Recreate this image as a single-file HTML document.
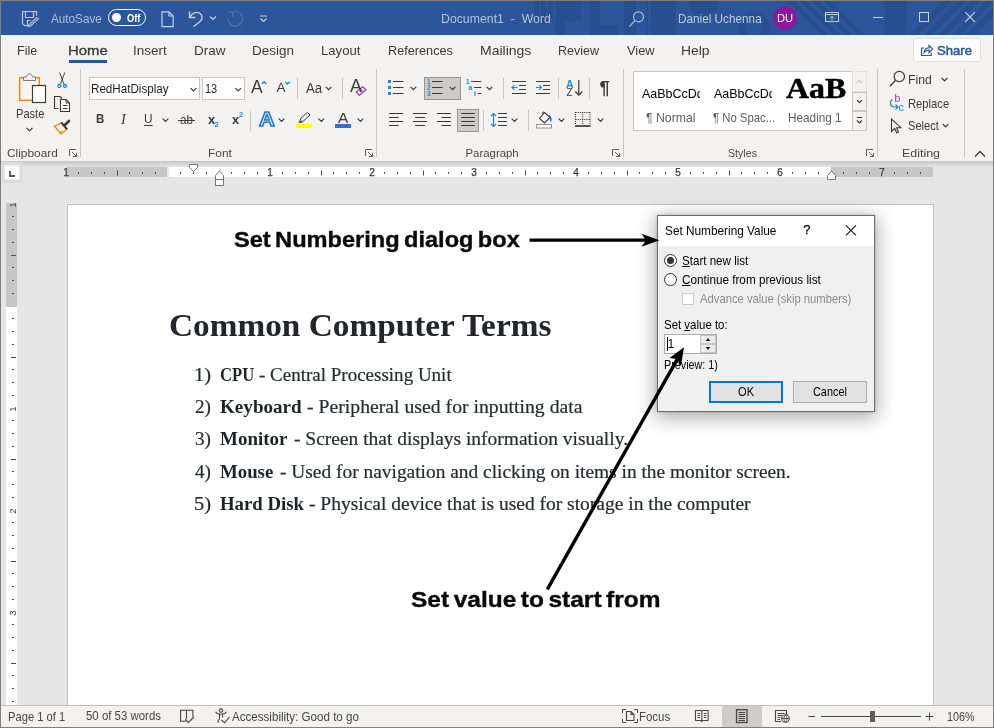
<!DOCTYPE html>
<html><head><meta charset="utf-8"><title>Document1 - Word</title>
<style>
*{box-sizing:border-box;margin:0;padding:0}
html,body{width:994px;height:728px;overflow:hidden;background:#f3f2f1}
body{position:relative;font-family:"Liberation Sans",sans-serif;font-size:13px;color:#323130}
.a{position:absolute;white-space:nowrap}
#title,#tabs,#ribbon,#doc,#status{will-change:transform}
#win{position:absolute;left:0;top:0;width:994px;height:728px;border:1px solid #807e7c;overflow:hidden}
#title{position:absolute;left:1px;top:1px;width:992px;height:34px;background:#2b579a;overflow:hidden}
#title .t{position:absolute;white-space:nowrap;color:#fff;font-size:13px;line-height:16px}
#tabs{position:absolute;left:1px;top:35px;width:992px;height:31px;background:#f3f2f1}
#tabs .t{position:absolute;top:7px;line-height:16px;font-size:13.2px;color:#3b3a39;white-space:nowrap}
#ribbon{position:absolute;left:0;top:0;width:994px;height:161px}
#doc{position:absolute;left:1px;top:161px;width:992px;height:544px;background:#e6e6e6;overflow:hidden}
#page{position:absolute;left:66px;top:43px;width:867px;height:520px;background:#fff;border:1px solid #c0c0c0;border-bottom:none}
#status{position:absolute;left:1px;top:705px;width:992px;height:22px;background:#f3f2f1;border-top:1px solid #c2c0be}
</style></head>
<body>
<div id="win"></div>
<div id="title"><svg class="a" style="left:0;top:0" width="992" height="34" viewBox="1 1 992 34">
<g fill="#274f8f">
<rect x="535" y="0" width="4" height="18"/><rect x="541" y="0" width="5" height="24"/><rect x="548" y="0" width="5" height="18"/>
<rect x="555.500" y="0" width="10" height="36"/><rect x="565" y="0" width="16" height="21"/><rect x="590" y="0" width="10" height="36"/><rect x="600" y="25" width="18" height="11"/>
<rect x="624" y="0" width="12" height="36"/>
<rect x="646" y="0" width="2" height="36"/><rect x="651" y="0" width="2" height="36"/><rect x="655" y="0" width="3" height="36"/><rect x="660" y="0" width="4" height="36"/><rect x="666" y="0" width="6" height="36"/>
<circle cx="703" cy="3" r="14"/>
</g>
<g fill="none" stroke="#274f8f">
<circle cx="754" cy="28" r="12" stroke-width="8"/>
<path d="M790 0l36 36M802 0l36 36M814 0l36 36M826 0l36 36" stroke-width="5"/>
<circle cx="780" cy="18" r="116" stroke-width="22"/>
<path d="M913 36l36-36M927 36l36-36M941 36l36-36M955 36l36-36M969 36l36-36" stroke-width="6"/>
</g></svg>
<svg class="a" style="left:20px;top:9px" width="19" height="18" viewBox="0 0 19 18" fill="none" stroke="#b9c7df" stroke-width="1.200">
<path d="M15.500 5.700V1.500H1.500v12.200l2.500 2h2.500v-5.200h3"/><path d="M4.500 1.500v6h8v-6"/><path d="M7.100 16.700l1.140-2.620L16 7.200l1.600 1.800-7.760 6.880z" fill="#b9c7df" fill-opacity=".45" stroke-width="1"/></svg>
<div class="a" style="left:50.00px;top:7.5px;line-height:20px;font-size:12.300px;transform:scaleX(0.9528);transform-origin:0 50%;color:#aebcda">AutoSave</div>
<div class="a" style="left:107px;top:8px;width:38px;height:17px;border:1.3px solid #fff;border-radius:9px"></div>
<div class="a" style="left:111px;top:12px;width:9px;height:9px;border-radius:5px;background:#fff"></div>
<div class="a" style="left:126.00px;top:6.5px;line-height:20px;font-size:11px;transform:scaleX(0.8438);transform-origin:0 50%;color:#fff;font-weight:bold">Off</div>
<svg class="a" style="left:159px;top:9px" width="16" height="18" viewBox="0 0 16 18" fill="none" stroke="#c3d0e6" stroke-width="1.2"><path d="M2 1.8h7l4.2 4.2v10.6H2zM9 1.8v4.2h4.2"/></svg>
<svg class="a" style="left:186px;top:8px" width="18" height="19" viewBox="0 0 18 19" fill="none" stroke="#c3d0e6" stroke-width="1.4"><path d="M2.5 2.5v6h6"/><path d="M2.8 8.2C5 4.2 9.5 2 13 4.500c3 2.200 2.600 5.800 0 8L6.500 17.800"/></svg>
<svg class="a" style="left:208px;top:14px" width="8" height="6" viewBox="0 0 8 6" fill="none" stroke="#c3d0e6" stroke-width="1.2"><path d="M1 1.500l3 3 3-3"/></svg>
<svg class="a" style="left:225px;top:8px" width="19" height="19" viewBox="0 0 19 19" fill="none" stroke="#4a70ad" stroke-width="1.4"><path d="M8.030 2.510A7.300 7.300 0 1 1 2.050 8.800"/><path d="M1.500 2.800h5.200v5.200"/></svg>
<svg class="a" style="left:258px;top:14px" width="9" height="8" viewBox="0 0 9 8" fill="none" stroke="#c3d0e6" stroke-width="1.2"><path d="M1 1h7M1.500 3.500l3 3 3-3"/></svg>
<div class="a" style="left:439.99px;top:7.8px;line-height:20px;font-size:12.200px;transform:scaleX(1.0093);transform-origin:0 50%;color:#b4c2dc">Document1&nbsp; -&nbsp; Word</div>
<svg class="a" style="left:627px;top:9px" width="18" height="18" viewBox="0 0 18 18" fill="none" stroke="#aab9d5" stroke-width="1.2"><circle cx="10.500" cy="6.800" r="5"/><path d="M7 10.500L1.500 16.500"/></svg>
<div class="a" style="left:677.03px;top:7.6px;line-height:20px;font-size:12.200px;transform:scaleX(0.9651);transform-origin:0 50%;color:#bccae0">Daniel Uchenna</div>
<div class="a" style="left:772px;top:5px;width:24px;height:24px;border-radius:12px;background:#8b1a9a"></div>
<div class="a" style="left:775.96px;top:7px;line-height:20px;font-size:10.800px;transform:scaleX(1.0357);transform-origin:0 50%;color:#fff">DU</div>
<svg class="a" style="left:823px;top:10px" width="16" height="12" viewBox="0 0 16 12" fill="none" stroke="#c0cce2" stroke-width="1"><rect x="1.500" y="1.500" width="13" height="9"/><path d="M1.500 3.500h13M8 9.500V5.500M6 7.300l2-2 2 2"/></svg>
<div class="a" style="left:872px;top:16px;width:10px;height:1px;background:#c5d0e4"></div>
<div class="a" style="left:918px;top:11px;width:10px;height:10px;border:1px solid #c5d0e4"></div>
<svg class="a" style="left:963px;top:10px" width="12" height="12" viewBox="0 0 12 12" fill="none" stroke="#c8d3e6" stroke-width="1.1"><path d="M1.200 1.200l9.800 9.800M11 1.200l-9.800 9.800"/></svg>
</div>
<div id="tabs"><div class="a" style="left:16.05px;top:6px;line-height:20px;font-size:13.3px;transform:scaleX(0.9500);transform-origin:0 50%;color:#3b3a39">File</div>
<div class="a" style="left:66.88px;top:6px;line-height:20px;font-size:13.3px;transform:scaleX(1.1176);transform-origin:0 50%;color:#3b3a39;-webkit-text-stroke:.35px #3b3a39">Home</div>
<div class="a" style="left:68px;top:25px;width:38px;height:3px;background:#2b579a"></div>
<div class="a" style="left:131.98px;top:6px;line-height:20px;font-size:13.3px;transform:scaleX(1.0156);transform-origin:0 50%;color:#3b3a39">Insert</div>
<div class="a" style="left:192.98px;top:6px;line-height:20px;font-size:13.3px;transform:scaleX(1.0167);transform-origin:0 50%;color:#3b3a39">Draw</div>
<div class="a" style="left:250.99px;top:6px;line-height:20px;font-size:13.3px;transform:scaleX(1.0125);transform-origin:0 50%;color:#3b3a39">Design</div>
<div class="a" style="left:320.01px;top:6px;line-height:20px;font-size:13.3px;transform:scaleX(0.9872);transform-origin:0 50%;color:#3b3a39">Layout</div>
<div class="a" style="left:387.04px;top:6px;line-height:20px;font-size:13.3px;transform:scaleX(0.9552);transform-origin:0 50%;color:#3b3a39">References</div>
<div class="a" style="left:478.95px;top:6px;line-height:20px;font-size:13.3px;transform:scaleX(1.0532);transform-origin:0 50%;color:#3b3a39">Mailings</div>
<div class="a" style="left:557.06px;top:6px;line-height:20px;font-size:13.3px;transform:scaleX(0.9419);transform-origin:0 50%;color:#3b3a39">Review</div>
<div class="a" style="left:625.50px;top:6px;line-height:20px;font-size:13.3px;transform:scaleX(0.9655);transform-origin:0 50%;color:#3b3a39">View</div>
<div class="a" style="left:679.96px;top:6px;line-height:20px;font-size:13.3px;transform:scaleX(1.0385);transform-origin:0 50%;color:#3b3a39">Help</div>
<div class="a" style="left:912px;top:3px;width:68px;height:24px;background:#fff;border:1px solid #e1dfdd;border-radius:3px"></div>
<svg class="a" style="left:919px;top:8px" width="14" height="14" viewBox="0 0 14 14" fill="none" stroke="#2b579a" stroke-width="1.2"><path d="M4 5H1.600v7.500h9.600V9.500"/><path d="M4.200 9.500C4.600 6.500 6.500 4.800 9 4.800V2.500l3.600 3.500L9 9.500V7.200C7 7.200 5.500 7.800 4.200 9.500z"/></svg>
<div class="a" style="left:936.00px;top:6px;line-height:20px;font-size:13.3px;transform:scaleX(0.9857);transform-origin:0 50%;color:#2b579a;-webkit-text-stroke:.5px #2b579a">Share</div>
</div>
<div id="ribbon"><svg class="a" style="left:0;top:0" width="994" height="161" viewBox="0 0 994 161" fill="none">
<!-- group separators -->
<g stroke="#c8c6c4" stroke-width="1">
<path d="M80.500 69v88M376.500 69v88M623.500 69v88M877.500 69v88M964.500 69v88"/>
<path d="M297.500 78v21M342.500 78v21M250.500 111v20M503.500 78v21M558.500 78v21M589.500 78v21M483.500 110v21M528.500 110v21"/>
</g>
<!-- dialog launchers -->
<g stroke="#605e5c" stroke-width="1">
<path id="dl" d="M69.500 156v-6.500h6.500M72 152l4.500 4.500M76.500 153v3.500h-3.500"/>
<path d="M365.500 156v-6.500h6.500M368 152l4.500 4.500M372.500 153v3.500h-3.500"/>
<path d="M612.500 156v-6.500h6.500M615 152l4.500 4.500M619.500 153v3.500h-3.500"/>
<path d="M866.500 156v-6.500h6.500M869 152l4.500 4.500M873.500 153v3.500h-3.500"/>
</g>
<path d="M975 156.500l5-5 5 5" stroke="#3b3a39" stroke-width="1.300"/>
<!-- PASTE -->
<rect x="19.700" y="77.700" width="19.600" height="22.600" fill="#faf6ef" stroke="#e48a1f" stroke-width="1.500"/>
<path d="M23.500 80.500v-3.500h3c.3-2 1.300-3.200 3-3.200s2.700 1.200 3 3.200h3v3.500z" fill="#f3f2f1" stroke="#797775" stroke-width="1"/>
<rect x="32.500" y="85.500" width="13" height="17" fill="#fff" stroke="#3b3a39" stroke-width="1.200"/>
<path d="M26.500 127.800l3 3 3-3" stroke="#3b3a39" stroke-width="1.200"/>
<!-- scissors -->
<path d="M59.600 72.400l4.400 12M64.800 72.400l-4.400 12" stroke="#4a4a4a" stroke-width="1"/>
<circle cx="59.300" cy="86" r="1.500" stroke="#1e8ad6" stroke-width="1.300"/><circle cx="65" cy="86" r="1.500" stroke="#1e8ad6" stroke-width="1.300"/>
<!-- copy -->
<path d="M58.500 108.500h-4v-12h5.500l2 2" stroke="#3b3a39" stroke-width="1.100"/>
<path d="M60.500 99.500h5.500l3.500 3.500v8.500h-9z" fill="#fff" stroke="#3b3a39" stroke-width="1.100"/><path d="M66 99.500v3.500h3.500M63 105.500h4.500M63 108.500h4.500" stroke="#3b3a39" stroke-width="1"/>
<!-- format painter -->
<path d="M54.600 126.200L61.300 123 66.500 129.500 61 134z" fill="#fdf4ea" stroke="#e48a1f" stroke-width="1.300"/><path d="M57.800 130.300l5.700 1.200-2.500 2.300z" fill="#f0a64a"/>
<path d="M61.300 122.300L67.200 129.300" stroke="#3b3a39" stroke-width="2"/><path d="M64.800 125L69 121" stroke="#3b3a39" stroke-width="2.600" stroke-linecap="round"/>
<!-- font boxes -->
<rect x="89.500" y="77.500" width="110" height="22" fill="#fff" stroke="#c8c6c4"/>
<rect x="202.500" y="77.500" width="42" height="22" fill="#fff" stroke="#c8c6c4"/>
<g stroke="#3b3a39" stroke-width="1.200">
<path d="M190.700 88.200l2.800 2.800 2.800-2.800M235.400 88.200l2.800 2.800 2.800-2.800"/>
<path d="M162.700 118.700l2.800 2.800 2.800-2.800"/>
<path d="M325.800 86.800l2.800 2.800 2.800-2.800"/>
<path d="M278.800 118.700l2.800 2.800 2.800-2.800M318.500 118.700l2.800 2.800 2.800-2.800M357.700 118.700l2.800 2.800 2.800-2.800"/>
<path d="M410.600 86.800l2.800 2.800 2.800-2.800M486.700 86.800l2.800 2.800 2.800-2.800"/>
<path d="M511.700 118.700l2.800 2.800 2.800-2.800M558.700 118.700l2.800 2.800 2.800-2.800M597.800 118.700l2.800 2.800 2.800-2.800"/>
<path d="M941.700 78l2.800 2.800 2.800-2.800M942.800 124.200l2.800 2.800 2.800-2.800"/>
</g>
<!-- grow/shrink carets -->
<path d="M261.800 84l2.300-2.300 2.300 2.300" stroke="#1e8ad6" stroke-width="1.300"/><path d="M285.200 81.700l2.300 2.300 2.300-2.300" stroke="#1e8ad6" stroke-width="1.300"/>
<!-- clear formatting eraser -->
<path d="M356.300 92L362.800 86.700 366 89.800 359.300 95.300z" fill="#f3f2f1" stroke="#a23db5" stroke-width="1.200"/><path d="M360.300 88.800l3.200 3.100" stroke="#a23db5" stroke-width="1"/>
<!-- highlight / font color -->
<rect x="296" y="124" width="16" height="4" fill="#ffff00"/>
<path d="M299.500 121.500l1.500-3.500 6.500-5.500 2.500 2.500-6.500 6z" fill="#f3f2f1" stroke="#3b3a39" stroke-width="1"/><path d="M298 123l1.500-1.500 3.500 0-1 1.500z" fill="#605e5c"/>
<rect x="335" y="124" width="16" height="4" fill="#3b6cc7"/>
<!-- bullets -->
<g fill="#1e8ad6"><rect x="388" y="80" width="3" height="3"/><rect x="388" y="86" width="3" height="3"/><rect x="388" y="92" width="3" height="3"/></g>
<path d="M393 81.500h10.500M393 87.500h10.500M393 93.500h10.500" stroke="#3b3a39" stroke-width="1.100"/>
<!-- numbering selected -->
<rect x="424.500" y="77.500" width="36" height="22" fill="#cdcbc9" stroke="#979593"/>
<path d="M432 81.500h10.500M432 87.500h10.500M432 93.500h10.500" stroke="#3b3a39" stroke-width="1.100"/>
<path d="M449.800 86.800l2.800 2.800 2.800-2.800" stroke="#3b3a39" stroke-width="1.200"/>
<!-- multilevel -->
<path d="M471 81.500h10.300M474 87.500h7.300M477.500 93.500h3.800" stroke="#3b3a39" stroke-width="1.100"/>
<!-- indent buttons -->
<path d="M512 81.500h14M519 85.500h7M519 89.500h7M512 93.500h14M536 81.500h14M543 85.500h7M543 89.500h7M536 93.500h14" stroke="#3b3a39" stroke-width="1.100"/>
<path d="M517.500 87.500h-5.500M514.300 85.200l-2.300 2.300 2.300 2.300M536 87.500h5.500M539.200 85.200l2.300 2.300-2.300 2.300" stroke="#1e8ad6" stroke-width="1.200"/>
<!-- sort arrow -->
<path d="M578.800 80v15M575.200 91.500l3.600 3.600 3.600-3.600" stroke="#3b3a39" stroke-width="1.200"/>
<!-- alignment -->
<g stroke="#3b3a39" stroke-width="1.100">
<path d="M389 113.500h14.200M389 117.500h9.700M389 121.500h14.200M389 125.500h9.700"/>
<path d="M413 113.500h14M415.200 117.500h9.700M413 121.500h14M415.200 125.500h9.700"/>
<path d="M437 113.500h14M441.400 117.500h9.600M437 121.500h14M441.400 125.500h9.600"/>
</g>
<rect x="457.500" y="109.500" width="21" height="22" fill="#cdcbc9" stroke="#979593"/>
<path d="M461 113.500h14M461 117.500h14M461 121.500h14M461 125.500h14" stroke="#3b3a39" stroke-width="1.100"/>
<!-- line spacing -->
<path d="M498 113.500h9M498 117.500h9M498 121.500h9M498 125.500h9" stroke="#3b3a39" stroke-width="1.100"/>
<path d="M493.500 113.500v13M491 116l2.500-2.500 2.500 2.500M491 124l2.500 2.500 2.500-2.500" stroke="#1e8ad6" stroke-width="1.200"/>
<!-- shading -->
<rect x="536.500" y="124.500" width="15" height="3.500" fill="#fff" stroke="#979593"/>
<path d="M539.500 118.500l5-6 5.500 5-5.500 5.500z" fill="#f3f2f1" stroke="#3b3a39" stroke-width="1.100"/><path d="M544.500 112.500c-1.500-1-2.500 0-1.500 1.500" stroke="#3b3a39" stroke-width="1"/>
<path d="M549 116c1.800 1 2.200 3.200 1.600 5.500" stroke="#1e6fc0" stroke-width="1.500"/>
<!-- borders -->
<g stroke="#201f1e" stroke-width="1" stroke-dasharray="1 1.200"><path d="M575.500 112.500h15M575.500 112v13M590 112v13M582.700 112v13M575.500 119.500h15"/></g>
<path d="M575 126h15.500" stroke="#201f1e" stroke-width="1.500"/>
<!-- styles gallery -->
<rect x="633.500" y="71.500" width="219" height="59" fill="#fff" stroke="#c8c6c4"/>
<rect x="852.500" y="71.500" width="14" height="20" fill="#f3f2f1" stroke="#e1dfdd"/>
<rect x="852.500" y="92.500" width="14" height="18" fill="#f3f2f1" stroke="#c8c6c4"/>
<rect x="852.500" y="111.500" width="14" height="19" fill="#f3f2f1" stroke="#c8c6c4"/>
<path d="M857 82.800l2.500-2.500 2.500 2.500" stroke="#c8c6c4" stroke-width="1.100"/>
<path d="M857 100.200l2.500 2.500 2.500-2.500" stroke="#3b3a39" stroke-width="1.200"/>
<path d="M857 117.500h5M857 120.500l2.500 2.500 2.500-2.500" stroke="#3b3a39" stroke-width="1.200"/>
<!-- find -->
<circle cx="899.300" cy="76.500" r="5.200" stroke="#3b3a39" stroke-width="1.200"/><path d="M895.600 80.300l-5.600 5.900" stroke="#3b3a39" stroke-width="1.300"/>
<!-- replace arrow -->
<path d="M892.500 99.500c-3.500 2.500-2.500 7 2 7.500h3M895.500 104.500l2.500 2.500-2.500 2.500" stroke="#1e8ad6" stroke-width="1.200"/>
<!-- select cursor -->
<path d="M891.500 119v12.500l3.200-3 2 4.300 1.800-.8-2-4.300h4.300z" stroke="#3b3a39" stroke-width="1.100"/>
</svg>
<div class="a" style="left:15.67px;top:103.5px;line-height:20px;font-size:13.3px;transform:scaleX(0.8333);transform-origin:0 50%;color:#3b3a39">Paste</div>
<div class="a" style="left:7.00px;top:143.3px;line-height:20px;font-size:11.4px;transform:scaleX(1.0417);transform-origin:0 50%;color:#484644">Clipboard</div>
<div class="a" style="left:208.45px;top:143.3px;line-height:20px;font-size:11.4px;transform:scaleX(1.0455);transform-origin:0 50%;color:#484644">Font</div>
<div class="a" style="left:465.50px;top:143.3px;line-height:20px;font-size:11.4px;transform:scaleX(1.0000);transform-origin:0 50%;color:#484644">Paragraph</div>
<div class="a" style="left:727.57px;top:143.3px;line-height:20px;font-size:11.4px;transform:scaleX(0.9333);transform-origin:0 50%;color:#484644">Styles</div>
<div class="a" style="left:902.41px;top:143.3px;line-height:20px;font-size:11.4px;transform:scaleX(1.0909);transform-origin:0 50%;color:#484644">Editing</div>
<div class="a" style="left:91.12px;top:78.5px;line-height:20px;font-size:13.3px;transform:scaleX(0.8750);transform-origin:0 50%;color:#201f1e">RedHatDisplay</div>
<div class="a" style="left:204.68px;top:78.5px;line-height:20px;font-size:13.3px;transform:scaleX(0.8214);transform-origin:0 50%;color:#201f1e">13</div>
<div class="a" style="left:95.65px;top:109px;line-height:20px;font-size:13.5px;color:#3b3a39;font-weight:bold;transform:scaleX(.85);transform-origin:0 50%">B</div>
<div class="a" style="left:121.00px;top:109px;line-height:20px;font-size:14.5px;color:#3b3a39;font-style:italic;font-family:'Liberation Serif',serif">I</div>
<div class="a" style="left:143.50px;top:109px;line-height:20px;font-size:13.5px;color:#3b3a39;text-decoration:underline;text-underline-offset:2px;transform:scaleX(.88);transform-origin:0 50%">U</div>
<div class="a" style="left:179.50px;top:109.5px;line-height:20px;font-size:12.5px;transform:scaleX(0.9286);transform-origin:0 50%;color:#3b3a39">ab</div>
<div class="a" style="left:178px;top:120px;width:17px;height:1px;background:#3b3a39"></div>
<div class="a" style="left:208.00px;top:109.5px;line-height:20px;font-size:13px;color:#3b3a39;font-weight:bold">x</div>
<div class="a" style="left:214.50px;top:115px;line-height:20px;font-size:7.500px;color:#1e8ad6;font-weight:bold">2</div>
<div class="a" style="left:232.00px;top:109.5px;line-height:20px;font-size:13px;color:#3b3a39;font-weight:bold">x</div>
<div class="a" style="left:239.00px;top:104.5px;line-height:20px;font-size:7.500px;color:#1e8ad6;font-weight:bold">2</div>
<div class="a" style="left:251.00px;top:76.5px;line-height:20px;font-size:17.5px;color:#3b3a39">A</div>
<div class="a" style="left:276.50px;top:78px;line-height:20px;font-size:13.5px;color:#3b3a39">A</div>
<div class="a" style="left:305.50px;top:78px;line-height:20px;font-size:14px;transform:scaleX(0.9412);transform-origin:0 50%;color:#3b3a39">Aa</div>
<div class="a" style="left:350.00px;top:76px;line-height:20px;font-size:18px;color:#3b3a39">A</div>
<div class="a" style="left:259.12px;top:109px;line-height:20px;font-size:19.500px;color:#dcecfa;font-weight:bold;-webkit-text-stroke:1.400px #1e79cc;transform:scaleX(1.12);transform-origin:0 50%">A</div>
<div class="a" style="left:338.00px;top:107.5px;line-height:20px;font-size:15.500px;color:#3b3a39">A</div>
<div class="a" style="left:427.00px;top:71.5px;line-height:20px;font-size:6.500px;color:#1e8ad6;font-weight:bold">1</div>
<div class="a" style="left:427.00px;top:77.5px;line-height:20px;font-size:6.500px;color:#1e8ad6;font-weight:bold">2</div>
<div class="a" style="left:427.00px;top:83.5px;line-height:20px;font-size:6.500px;color:#1e8ad6;font-weight:bold">3</div>
<div class="a" style="left:466.00px;top:71.5px;line-height:20px;font-size:6.500px;color:#1e8ad6;font-weight:bold">1</div>
<div class="a" style="left:468.50px;top:77.5px;line-height:20px;font-size:7px;color:#1e8ad6;font-weight:bold">a</div>
<div class="a" style="left:474.00px;top:83.5px;line-height:20px;font-size:7px;color:#1e8ad6;font-weight:bold">i</div>
<div class="a" style="left:566.00px;top:74px;line-height:20px;font-size:10.5px;color:#1e8ad6;font-weight:bold">A</div>
<div class="a" style="left:566.50px;top:82.5px;line-height:20px;font-size:10px;color:#3b3a39">Z</div>
<div class="a" style="left:599.50px;top:78px;line-height:20px;font-size:18.500px;color:#3b3a39;font-weight:bold">¶</div>
<div class="a" style="left:642px;top:83px;width:58px;height:20px;overflow:hidden"><div class="a" style="left:0.00px;top:0.5px;line-height:20px;font-size:13.200px;transform:scaleX(0.9462);transform-origin:0 50%;color:#000">AaBbCcDd</div></div>
<div class="a" style="left:714px;top:83px;width:58px;height:20px;overflow:hidden"><div class="a" style="left:0.00px;top:0.5px;line-height:20px;font-size:13.200px;transform:scaleX(0.9462);transform-origin:0 50%;color:#000">AaBbCcDd</div></div>
<div class="a" style="left:785.50px;top:78px;line-height:20px;font-size:30px;transform:scaleX(1.0625);transform-origin:0 50%;color:#000;font-weight:bold;-webkit-text-stroke:.5px #000;font-family:'Liberation Serif',serif">AaB</div>
<div class="a" style="left:646.00px;top:107.5px;line-height:20px;font-size:13px;transform:scaleX(0.9423);transform-origin:0 50%;color:#605e5c">¶ Normal</div>
<div class="a" style="left:712.50px;top:107.5px;line-height:20px;font-size:13px;transform:scaleX(0.8714);transform-origin:0 50%;color:#605e5c">¶ No Spac...</div>
<div class="a" style="left:787.59px;top:107.5px;line-height:20px;font-size:13px;transform:scaleX(0.9052);transform-origin:0 50%;color:#605e5c">Heading 1</div>
<div class="a" style="left:908.08px;top:69.6px;line-height:20px;font-size:13.3px;transform:scaleX(0.9167);transform-origin:0 50%;color:#3b3a39">Find</div>
<div class="a" style="left:894.50px;top:88px;line-height:20px;font-size:10.5px;color:#a23db5">b</div>
<div class="a" style="left:898.50px;top:97px;line-height:20px;font-size:11px;color:#1e8ad6">c</div>
<div class="a" style="left:908.16px;top:93.6px;line-height:20px;font-size:13.3px;transform:scaleX(0.8438);transform-origin:0 50%;color:#3b3a39">Replace</div>
<div class="a" style="left:908.17px;top:116.1px;line-height:20px;font-size:13.3px;transform:scaleX(0.8333);transform-origin:0 50%;color:#3b3a39">Select</div>
</div>
<div id="doc">
<svg class="a" style="left:0;top:0" width="992" height="544" viewBox="1 161 992 544" fill="none">
<rect x="1" y="161" width="992" height="1" fill="#c9c9c9"/>
<rect x="1" y="162" width="992" height="1" fill="#cdcdcd"/>
<rect x="1" y="163" width="992" height="1" fill="#d2d2d2"/>
<rect x="1" y="164" width="992" height="1" fill="#d8d8d8"/>
<rect x="1" y="165" width="992" height="1" fill="#dedede"/>
<rect x="1" y="166" width="992" height="1" fill="#e2e2e2"/>
<rect x="2" y="162" width="21" height="21" fill="#dcdcdc"/><rect x="4.500" y="165.500" width="15" height="14" fill="#fbfbfb"/>
<path d="M10 171v5h5" stroke="#555" stroke-width="1.800"/>
<rect x="169" y="167" width="662" height="10" fill="#fff"/>
<rect x="66" y="167" width="101" height="10" fill="#c6c6c6"/><rect x="831" y="167" width="102" height="10" fill="#c6c6c6"/>
<path d="M78.5 172v2M91.5 172v2M104.5 172v2M117.5 170.5v5M129.5 172v2M142.5 172v2M155.5 172v2M180.5 172v2M193.5 172v2M206.5 172v2M219.5 170.5v5M231.5 172v2M244.5 172v2M257.5 172v2M282.5 172v2M295.5 172v2M308.5 172v2M321.5 170.5v5M333.5 172v2M346.5 172v2M359.5 172v2M384.5 172v2M397.5 172v2M410.5 172v2M423.5 170.5v5M435.5 172v2M448.5 172v2M461.5 172v2M486.5 172v2M499.5 172v2M512.5 172v2M525.5 170.5v5M537.5 172v2M550.5 172v2M563.5 172v2M588.5 172v2M601.5 172v2M614.5 172v2M627.5 170.5v5M639.5 172v2M652.5 172v2M665.5 172v2M690.5 172v2M703.5 172v2M716.5 172v2M729.5 170.5v5M741.5 172v2M754.5 172v2M767.5 172v2M792.5 172v2M805.5 172v2M818.5 172v2M831.5 170.5v5M843.5 172v2M856.5 172v2M869.5 172v2M894.5 172v2M907.5 172v2M920.5 172v2" stroke="#4a4a4a" stroke-width="1"/>
<rect x="6" y="203" width="11" height="502" fill="#fff"/><rect x="6" y="203" width="11" height="104" fill="#c6c6c6"/>
<path d="M12 216.5h2M12 229.5h2M12 242.5h2M11 255.5h5M12 267.5h2M12 280.5h2M12 293.5h2M12 318.5h2M12 331.5h2M12 344.5h2M11 357.5h5M12 369.5h2M12 382.5h2M12 395.5h2M12 420.5h2M12 433.5h2M12 446.5h2M11 459.5h5M12 471.5h2M12 484.5h2M12 497.5h2M12 522.5h2M12 535.5h2M12 548.5h2M11 561.5h5M12 573.5h2M12 586.5h2M12 599.5h2M12 624.5h2M12 637.5h2M12 650.5h2M11 663.5h5M12 675.5h2M12 688.5h2M12 701.5h2" stroke="#4a4a4a" stroke-width="1"/>
<path d="M189.500 164.500h8v3l-4 4-4-4z" fill="#fff" stroke="#777" stroke-width="1"/>
<path d="M215.500 179.500v-4l4-4.500 4 4.500v4z" fill="#fff" stroke="#777" stroke-width="1"/><rect x="215.500" y="179.500" width="8" height="6" fill="#fff" stroke="#777"/>
<path d="M827.500 179.500v-4l4-4.500 4 4.500v4z" fill="#fff" stroke="#777" stroke-width="1"/>
<text x="66" y="176.200" font-size="10" stroke="#383838" stroke-width=".25" fill="#383838" text-anchor="middle" font-family="Liberation Sans, sans-serif">1</text>
<text x="270" y="176.200" font-size="10" stroke="#383838" stroke-width=".25" fill="#383838" text-anchor="middle" font-family="Liberation Sans, sans-serif">1</text>
<text x="372" y="176.200" font-size="10" stroke="#383838" stroke-width=".25" fill="#383838" text-anchor="middle" font-family="Liberation Sans, sans-serif">2</text>
<text x="474" y="176.200" font-size="10" stroke="#383838" stroke-width=".25" fill="#383838" text-anchor="middle" font-family="Liberation Sans, sans-serif">3</text>
<text x="576" y="176.200" font-size="10" stroke="#383838" stroke-width=".25" fill="#383838" text-anchor="middle" font-family="Liberation Sans, sans-serif">4</text>
<text x="678" y="176.200" font-size="10" stroke="#383838" stroke-width=".25" fill="#383838" text-anchor="middle" font-family="Liberation Sans, sans-serif">5</text>
<text x="780" y="176.200" font-size="10" stroke="#383838" stroke-width=".25" fill="#383838" text-anchor="middle" font-family="Liberation Sans, sans-serif">6</text>
<text x="882" y="176.200" font-size="10" stroke="#383838" stroke-width=".25" fill="#383838" text-anchor="middle" font-family="Liberation Sans, sans-serif">7</text>
<text transform="translate(16 205) rotate(-90)" font-size="9.500" fill="#383838" text-anchor="middle" font-family="Liberation Sans, sans-serif">1</text>
<text transform="translate(16 409) rotate(-90)" font-size="9.500" fill="#383838" text-anchor="middle" font-family="Liberation Sans, sans-serif">1</text>
<text transform="translate(16 511) rotate(-90)" font-size="9.500" fill="#383838" text-anchor="middle" font-family="Liberation Sans, sans-serif">2</text>
<text transform="translate(16 613) rotate(-90)" font-size="9.500" fill="#383838" text-anchor="middle" font-family="Liberation Sans, sans-serif">3</text>
</svg>
<div id="page"></div>
<div class="a" style="left:-1px;top:-161px;width:994px;height:728px">
<div class="a" style="left:234.20px;top:230.016px;line-height:20px;font-size:21.600px;transform:scaleX(1.0927);transform-origin:0 50%;color:#0a0a0a;font-weight:bold;-webkit-text-stroke:.35px #0a0a0a;word-spacing:-2px">Set Numbering dialog box</div>
<div class="a" style="left:410.80px;top:589.916px;line-height:20px;font-size:21.600px;transform:scaleX(1.1342);transform-origin:0 50%;color:#0a0a0a;font-weight:bold;-webkit-text-stroke:.35px #0a0a0a;word-spacing:-2px">Set value to start from</div>
<div class="a" style="left:169.48px;top:314.798px;line-height:20px;font-size:32.600px;transform:scaleX(1.0223);transform-origin:0 50%;color:#22262b;font-weight:bold;font-family:'Liberation Serif',serif">Common Computer Terms</div>
<div class="a" style="left:194.30px;top:364.923px;line-height:20px;font-size:18.600px;transform:scaleX(1.1000);transform-origin:0 50%;color:#272b30;-webkit-text-stroke:.2px #272b30;font-family:'Liberation Serif',serif">1)</div>
<div class="a" style="left:195.40px;top:396.923px;line-height:20px;font-size:18.600px;transform:scaleX(1.0267);transform-origin:0 50%;color:#272b30;-webkit-text-stroke:.2px #272b30;font-family:'Liberation Serif',serif">2)</div>
<div class="a" style="left:195.40px;top:429.223px;line-height:20px;font-size:18.600px;transform:scaleX(1.0267);transform-origin:0 50%;color:#272b30;-webkit-text-stroke:.2px #272b30;font-family:'Liberation Serif',serif">3)</div>
<div class="a" style="left:195.40px;top:461.523px;line-height:20px;font-size:18.600px;transform:scaleX(1.0267);transform-origin:0 50%;color:#272b30;-webkit-text-stroke:.2px #272b30;font-family:'Liberation Serif',serif">4)</div>
<div class="a" style="left:194.30px;top:493.723px;line-height:20px;font-size:18.600px;transform:scaleX(1.1000);transform-origin:0 50%;color:#272b30;-webkit-text-stroke:.2px #272b30;font-family:'Liberation Serif',serif">5)</div>
<div class="a" style="left:219.51px;top:364.923px;line-height:20px;font-size:18.600px;transform:scaleX(0.8946);transform-origin:0 50%;color:#1f2328;font-weight:bold;font-family:'Liberation Serif',serif">CPU</div>
<div class="a" style="left:220.40px;top:396.923px;line-height:20px;font-size:18.600px;transform:scaleX(1.0275);transform-origin:0 50%;color:#1f2328;font-weight:bold;font-family:'Liberation Serif',serif">Keyboard</div>
<div class="a" style="left:220.40px;top:429.223px;line-height:20px;font-size:18.600px;transform:scaleX(1.0197);transform-origin:0 50%;color:#1f2328;font-weight:bold;font-family:'Liberation Serif',serif">Monitor</div>
<div class="a" style="left:220.40px;top:461.523px;line-height:20px;font-size:18.600px;transform:scaleX(1.0113);transform-origin:0 50%;color:#1f2328;font-weight:bold;font-family:'Liberation Serif',serif">Mouse</div>
<div class="a" style="left:220.40px;top:493.723px;line-height:20px;font-size:18.600px;transform:scaleX(1.0096);transform-origin:0 50%;color:#1f2328;font-weight:bold;font-family:'Liberation Serif',serif">Hard Disk</div>
<div class="a" style="left:259.40px;top:364.923px;line-height:20px;font-size:18.600px;transform:scaleX(1.0222);transform-origin:0 50%;color:#272b30;-webkit-text-stroke:.2px #272b30;font-family:'Liberation Serif',serif">- Central Processing Unit</div>
<div class="a" style="left:307.20px;top:396.923px;line-height:20px;font-size:18.600px;transform:scaleX(1.0608);transform-origin:0 50%;color:#272b30;-webkit-text-stroke:.2px #272b30;font-family:'Liberation Serif',serif">- Peripheral used for inputting data</div>
<div class="a" style="left:293.60px;top:429.223px;line-height:20px;font-size:18.600px;transform:scaleX(1.0472);transform-origin:0 50%;color:#272b30;-webkit-text-stroke:.2px #272b30;font-family:'Liberation Serif',serif">- Screen that displays information visually.</div>
<div class="a" style="left:279.90px;top:461.523px;line-height:20px;font-size:18.600px;transform:scaleX(1.0432);transform-origin:0 50%;color:#272b30;-webkit-text-stroke:.2px #272b30;font-family:'Liberation Serif',serif">- Used for navigation and clicking on items in the monitor screen.</div>
<div class="a" style="left:309.30px;top:493.723px;line-height:20px;font-size:18.600px;transform:scaleX(1.0479);transform-origin:0 50%;color:#272b30;-webkit-text-stroke:.2px #272b30;font-family:'Liberation Serif',serif">- Physical device that is used for storage in the computer</div>
<div class="a" style="left:657px;top:215px;width:218px;height:197px;background:#f0f0f0;border:1px solid #6e6e6e;box-shadow:0 4px 18px 2px rgba(0,0,0,.32),0 0 3px rgba(0,0,0,.2)"></div>
<div class="a" style="left:658px;top:216px;width:216px;height:30px;background:#fff"></div>
<div class="a" style="left:665.23px;top:221px;line-height:20px;font-size:12.200px;transform:scaleX(0.9693);transform-origin:0 50%;color:#000">Set Numbering Value</div>
<div class="a" style="left:803.30px;top:220px;line-height:20px;font-size:13px;color:#000;-webkit-text-stroke:.25px #000">?</div>
<svg class="a" style="left:844px;top:224px" width="14" height="14" viewBox="0 0 14 14" fill="none" stroke="#1a1a1a" stroke-width="1.100"><path d="M2 1.300l10 10M12 1.300l-10 10"/></svg>
<div class="a" style="left:664px;top:254px;width:13px;height:13px;border:1px solid #333;border-radius:7px;background:#fff"></div>
<div class="a" style="left:667px;top:257px;width:7px;height:7px;border-radius:4px;background:#333"></div>
<div class="a" style="left:664px;top:273px;width:13px;height:13px;border:1px solid #333;border-radius:7px;background:#fff"></div>
<div class="a" style="left:681.50px;top:251px;line-height:20px;font-size:12.200px;transform:scaleX(0.9500);transform-origin:0 50%;color:#000"><u>S</u>tart new list</div>
<div class="a" style="left:681.50px;top:270px;line-height:20px;font-size:12.200px;transform:scaleX(0.9621);transform-origin:0 50%;color:#000"><u>C</u>ontinue from previous list</div>
<div class="a" style="left:682px;top:293px;width:12px;height:12px;border:1px solid #cfcfcf;background:#fff"></div>
<div class="a" style="left:699.50px;top:289.3px;line-height:20px;font-size:12.200px;transform:scaleX(0.9233);transform-origin:0 50%;color:#8b8b8b">Advance value (skip numbers)</div>
<div class="a" style="left:663.56px;top:315.2px;line-height:20px;font-size:12.200px;transform:scaleX(0.9394);transform-origin:0 50%;color:#000">Set <u>v</u>alue to:</div>
<div class="a" style="left:664px;top:334px;width:53px;height:20px;border:1px solid #adadad;background:#fff"></div>
<div class="a" style="left:700px;top:335px;width:16px;height:18px;border:1px solid #c4c4c4;background:#ebebeb"></div>
<div class="a" style="left:701px;top:343px;width:14px;height:2px;background:#c9c9c9"></div>
<svg class="a" style="left:700px;top:335px" width="16" height="18" viewBox="0 0 16 18"><path d="M5.500 6l2.500-3 2.500 3zM5.500 12l2.500 3 2.500-3z" fill="#222"/></svg>
<div class="a" style="left:667px;top:337px;width:1px;height:14px;background:#000"></div>
<div class="a" style="left:667.50px;top:334px;line-height:20px;font-size:12.200px;color:#000">1</div>
<div class="a" style="left:663.62px;top:355px;line-height:20px;font-size:12.200px;transform:scaleX(0.8833);transform-origin:0 50%;color:#000">Preview: 1)</div>
<div class="a" style="left:709px;top:381px;width:74px;height:22px;border:2px solid #0078d7;background:#e1e1e1"></div>
<div class="a" style="left:738.00px;top:382px;line-height:20px;font-size:12.200px;transform:scaleX(0.9118);transform-origin:0 50%;color:#000">OK</div>
<div class="a" style="left:793px;top:381px;width:74px;height:22px;border:1px solid #adadad;background:#e1e1e1"></div>
<div class="a" style="left:813.30px;top:382px;line-height:20px;font-size:12.200px;transform:scaleX(0.8919);transform-origin:0 50%;color:#000">Cancel</div>

<svg class="a" style="left:0;top:0" width="994" height="728" viewBox="0 0 994 728" fill="none">
<path d="M529.500 240.200H648" stroke="#000" stroke-width="3.200"/>
<path d="M659.500 240.200l-18-6.500 4.500 6.500-4.500 6.500z" fill="#000"/>
<path d="M547.300 589.300L678.200 357.600" stroke="#000" stroke-width="3.400"/>
<path d="M684 347.300l-3.200 18.900-3.500-7.100-7.800-1.200z" fill="#000"/>
</svg>
</div>

</div>
<div id="status"><div class="a" style="left:-1px;top:-706px;width:994px;height:728px">
<div class="a" style="left:7.58px;top:706.5px;line-height:20px;font-size:12.200px;transform:scaleX(0.9180);transform-origin:0 50%;color:#484644">Page 1 of 1</div>
<div class="a" style="left:85.50px;top:706px;line-height:20px;font-size:12.200px;transform:scaleX(0.9375);transform-origin:0 50%;color:#484644">50 of 53 words</div>
<div class="a" style="left:232.00px;top:706.5px;line-height:20px;font-size:12.200px;transform:scaleX(0.9511);transform-origin:0 50%;color:#484644">Accessibility: Good to go</div>
<div class="a" style="left:639.06px;top:706.5px;line-height:20px;font-size:12.200px;transform:scaleX(0.9375);transform-origin:0 50%;color:#484644">Focus</div>
<div class="a" style="left:946.62px;top:706.5px;line-height:20px;font-size:12.200px;transform:scaleX(0.8833);transform-origin:0 50%;color:#484644">106%</div>
<div class="a" style="left:722px;top:706px;width:40px;height:21px;background:#cfcdcb"></div>
<svg class="a" style="left:0;top:700px" width="994" height="28" viewBox="0 700 994 28" fill="none" stroke="#484644" stroke-width="1.100">
<!-- book/proofing -->
<path d="M185.500 721.300h-4.900v-11h5.900v9M186.500 710.300h6.400v6.700M185.100 719.500l3.200 3 5.700-5.500"/>
<!-- accessibility -->
<circle cx="221" cy="710.600" r="1.700"/><path d="M215.600 711.800c.8 1.700 2.600 2.200 3.900 2.200h3c1.300 0 3.100-.5 3.900-2.200M219.500 714v4c0 2-1.600 2.200-1.600 3.600 0 .6.400.9.900.9M222.500 714v3.500M221.400 720l3.200 2.700 4.900-5.700"/>
<!-- focus -->
<path d="M626.500 711.500h4.500l3 3v6h-7.500zM631 711.500v3h3"/><path d="M622.500 713v-3.500h3.500M634 709.500h3.500v3.500M622.500 719v3.500h3.500M637.500 719v3.500h-3.500" stroke-width="1"/>
<!-- read mode -->
<path d="M695.500 710.500h5.500l.8 1 .8-1h5.500v10h-5.500l-.8 1-.8-1h-5.500zM701.800 711.500v10"/><path d="M697.500 713.500h2.500M697.500 715.500h2.500M697.500 717.500h2.500M703.800 713.500h2.500M703.800 715.500h2.500M703.800 717.500h2.500" stroke-width="1"/>
<!-- print layout -->
<rect x="736.500" y="709.700" width="10.500" height="12.800" stroke-width="1.300"/><path d="M738.500 712.500h6.500M738.500 714.500h6.500M738.500 716.500h6.500M738.500 718.500h6.500M738.500 720.500h6.500" stroke-width="1"/>
<!-- web layout -->
<path d="M781 721.500h-5.500v-11h11v5"/><path d="M777.500 713.500h7M777.500 715.500h4.500M777.500 717.500h3M777.500 719.500h2.500" stroke-width="1"/>
<circle cx="785.500" cy="718.500" r="3.800" fill="#f3f2f1"/><path d="M781.700 718.500h7.600M785.500 714.700c-2 2.500-2 5 0 7.600c2-2.600 2-5.100 0-7.600" stroke-width=".9"/>
<!-- zoom -->
<path d="M808.500 716.500h6.500M821 716.500h100M925.500 716.500h8M929.500 712.500v8" stroke-width="1"/>
<rect x="870" y="711" width="5" height="11" fill="#605e5c" stroke="none"/>
</svg>
</div>
</div>
</body></html>
